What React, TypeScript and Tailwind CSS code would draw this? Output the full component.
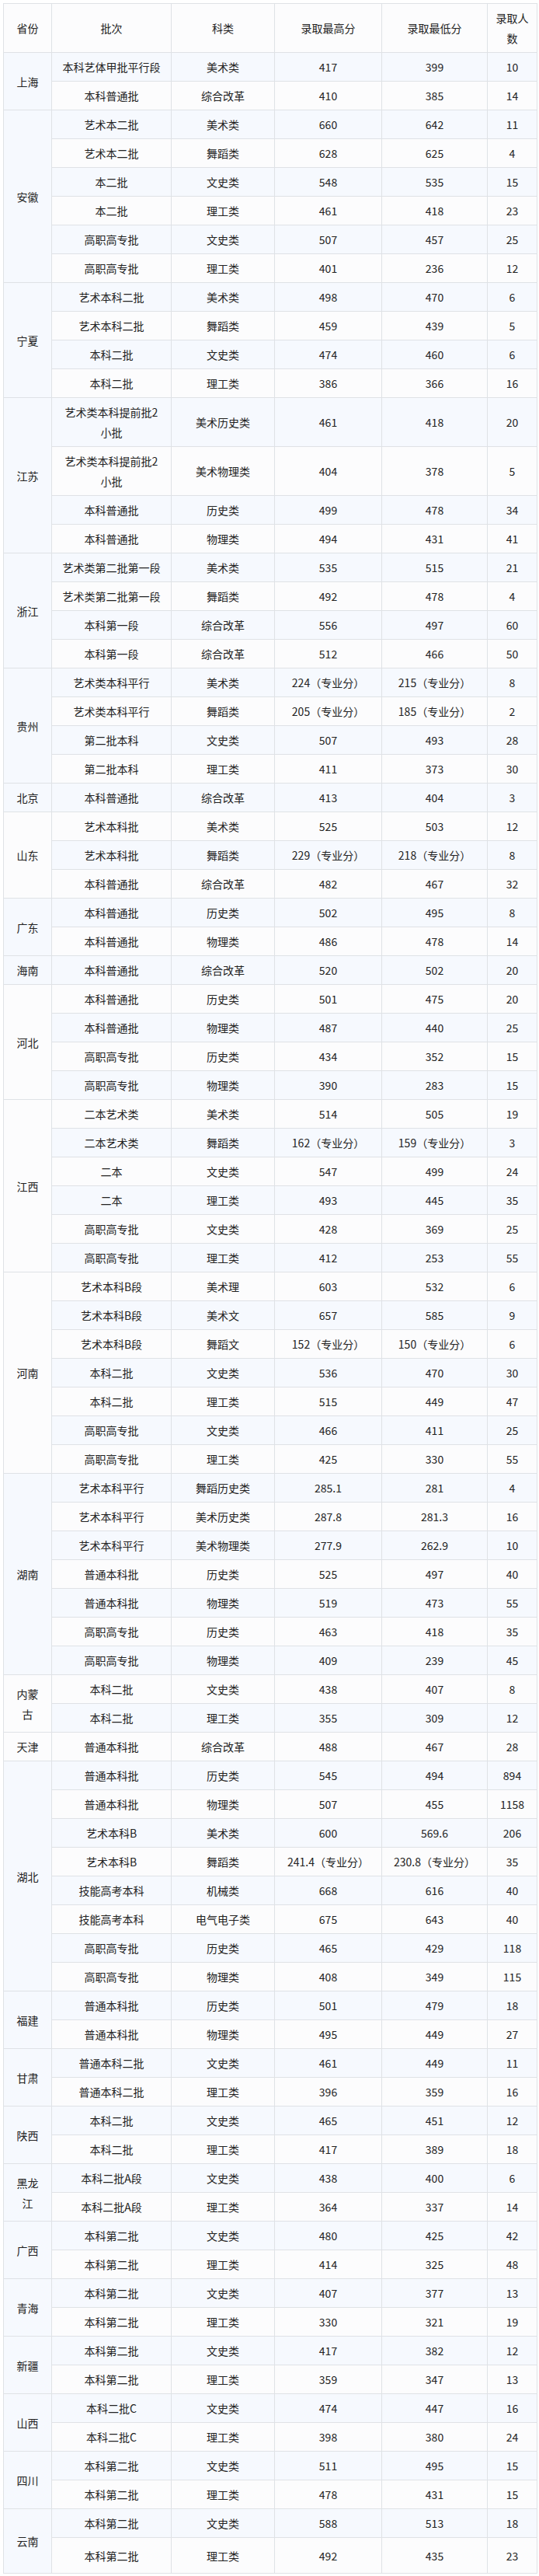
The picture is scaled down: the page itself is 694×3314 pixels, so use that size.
type Row = [string, string, string, string, string]
type Group = { p: string; rows: Row[] }

const groups: Group[] = [
  { p: "上海", rows: [
    ["本科艺体甲批平行段", "美术类", "417", "399", "10"],
    ["本科普通批", "综合改革", "410", "385", "14"],
  ] },
  { p: "安徽", rows: [
    ["艺术本二批", "美术类", "660", "642", "11"],
    ["艺术本二批", "舞蹈类", "628", "625", "4"],
    ["本二批", "文史类", "548", "535", "15"],
    ["本二批", "理工类", "461", "418", "23"],
    ["高职高专批", "文史类", "507", "457", "25"],
    ["高职高专批", "理工类", "401", "236", "12"],
  ] },
  { p: "宁夏", rows: [
    ["艺术本科二批", "美术类", "498", "470", "6"],
    ["艺术本科二批", "舞蹈类", "459", "439", "5"],
    ["本科二批", "文史类", "474", "460", "6"],
    ["本科二批", "理工类", "386", "366", "16"],
  ] },
  { p: "江苏", rows: [
    ["艺术类本科提前批2\n小批", "美术历史类", "461", "418", "20"],
    ["艺术类本科提前批2\n小批", "美术物理类", "404", "378", "5"],
    ["本科普通批", "历史类", "499", "478", "34"],
    ["本科普通批", "物理类", "494", "431", "41"],
  ] },
  { p: "浙江", rows: [
    ["艺术类第二批第一段", "美术类", "535", "515", "21"],
    ["艺术类第二批第一段", "舞蹈类", "492", "478", "4"],
    ["本科第一段", "综合改革", "556", "497", "60"],
    ["本科第一段", "综合改革", "512", "466", "50"],
  ] },
  { p: "贵州", rows: [
    ["艺术类本科平行", "美术类", "224（专业分）", "215（专业分）", "8"],
    ["艺术类本科平行", "舞蹈类", "205（专业分）", "185（专业分）", "2"],
    ["第二批本科", "文史类", "507", "493", "28"],
    ["第二批本科", "理工类", "411", "373", "30"],
  ] },
  { p: "北京", rows: [
    ["本科普通批", "综合改革", "413", "404", "3"],
  ] },
  { p: "山东", rows: [
    ["艺术本科批", "美术类", "525", "503", "12"],
    ["艺术本科批", "舞蹈类", "229（专业分）", "218（专业分）", "8"],
    ["本科普通批", "综合改革", "482", "467", "32"],
  ] },
  { p: "广东", rows: [
    ["本科普通批", "历史类", "502", "495", "8"],
    ["本科普通批", "物理类", "486", "478", "14"],
  ] },
  { p: "海南", rows: [
    ["本科普通批", "综合改革", "520", "502", "20"],
  ] },
  { p: "河北", rows: [
    ["本科普通批", "历史类", "501", "475", "20"],
    ["本科普通批", "物理类", "487", "440", "25"],
    ["高职高专批", "历史类", "434", "352", "15"],
    ["高职高专批", "物理类", "390", "283", "15"],
  ] },
  { p: "江西", rows: [
    ["二本艺术类", "美术类", "514", "505", "19"],
    ["二本艺术类", "舞蹈类", "162（专业分）", "159（专业分）", "3"],
    ["二本", "文史类", "547", "499", "24"],
    ["二本", "理工类", "493", "445", "35"],
    ["高职高专批", "文史类", "428", "369", "25"],
    ["高职高专批", "理工类", "412", "253", "55"],
  ] },
  { p: "河南", rows: [
    ["艺术本科B段", "美术理", "603", "532", "6"],
    ["艺术本科B段", "美术文", "657", "585", "9"],
    ["艺术本科B段", "舞蹈文", "152（专业分）", "150（专业分）", "6"],
    ["本科二批", "文史类", "536", "470", "30"],
    ["本科二批", "理工类", "515", "449", "47"],
    ["高职高专批", "文史类", "466", "411", "25"],
    ["高职高专批", "理工类", "425", "330", "55"],
  ] },
  { p: "湖南", rows: [
    ["艺术本科平行", "舞蹈历史类", "285.1", "281", "4"],
    ["艺术本科平行", "美术历史类", "287.8", "281.3", "16"],
    ["艺术本科平行", "美术物理类", "277.9", "262.9", "10"],
    ["普通本科批", "历史类", "525", "497", "40"],
    ["普通本科批", "物理类", "519", "473", "55"],
    ["高职高专批", "历史类", "463", "418", "35"],
    ["高职高专批", "物理类", "409", "239", "45"],
  ] },
  { p: "内蒙\n古", rows: [
    ["本科二批", "文史类", "438", "407", "8"],
    ["本科二批", "理工类", "355", "309", "12"],
  ] },
  { p: "天津", rows: [
    ["普通本科批", "综合改革", "488", "467", "28"],
  ] },
  { p: "湖北", rows: [
    ["普通本科批", "历史类", "545", "494", "894"],
    ["普通本科批", "物理类", "507", "455", "1158"],
    ["艺术本科B", "美术类", "600", "569.6", "206"],
    ["艺术本科B", "舞蹈类", "241.4（专业分）", "230.8（专业分）", "35"],
    ["技能高考本科", "机械类", "668", "616", "40"],
    ["技能高考本科", "电气电子类", "675", "643", "40"],
    ["高职高专批", "历史类", "465", "429", "118"],
    ["高职高专批", "物理类", "408", "349", "115"],
  ] },
  { p: "福建", rows: [
    ["普通本科批", "历史类", "501", "479", "18"],
    ["普通本科批", "物理类", "495", "449", "27"],
  ] },
  { p: "甘肃", rows: [
    ["普通本科二批", "文史类", "461", "449", "11"],
    ["普通本科二批", "理工类", "396", "359", "16"],
  ] },
  { p: "陕西", rows: [
    ["本科二批", "文史类", "465", "451", "12"],
    ["本科二批", "理工类", "417", "389", "18"],
  ] },
  { p: "黑龙\n江", rows: [
    ["本科二批A段", "文史类", "438", "400", "6"],
    ["本科二批A段", "理工类", "364", "337", "14"],
  ] },
  { p: "广西", rows: [
    ["本科第二批", "文史类", "480", "425", "42"],
    ["本科第二批", "理工类", "414", "325", "48"],
  ] },
  { p: "青海", rows: [
    ["本科第二批", "文史类", "407", "377", "13"],
    ["本科第二批", "理工类", "330", "321", "19"],
  ] },
  { p: "新疆", rows: [
    ["本科第二批", "文史类", "417", "382", "12"],
    ["本科第二批", "理工类", "359", "347", "13"],
  ] },
  { p: "山西", rows: [
    ["本科二批C", "文史类", "474", "447", "16"],
    ["本科二批C", "理工类", "398", "380", "24"],
  ] },
  { p: "四川", rows: [
    ["本科第二批", "文史类", "511", "495", "15"],
    ["本科第二批", "理工类", "478", "431", "15"],
  ] },
  { p: "云南", rows: [
    ["本科第二批", "文史类", "588", "513", "18"],
    ["本科第二批", "理工类", "492", "435", "23"],
  ] },
]

const cell = "border border-[#dfe2e6] px-[10px] py-[5px] whitespace-pre-line align-middle"

export default function App() {
  const total = groups.reduce((s, g) => s + g.rows.length, 0)
  let n = 0
  const body = groups.flatMap((g) =>
    g.rows.map((r, i) => {
      n++
      const bg = n % 2 === 1 ? "bg-[#f6f9fe]" : "bg-[#fcfcfd]"
      const last = n === total
      return (
        <tr key={n} className={last ? "h-[46px]" : ""}>
          {i === 0 && (
            <td rowSpan={g.rows.length} className={`${cell} ${bg}`}>
              {g.p}
            </td>
          )}
          {r.map((v, k) => (
            <td key={k} className={`${cell} ${bg}`}>
              {v}
            </td>
          ))}
        </tr>
      )
    })
  )

  return (
    <div className="bg-white pl-[4px] pt-[4px] pb-[3px] font-['Noto_Sans_CJK_SC','Noto_Sans',sans-serif] text-[14px] leading-[26px] text-[#222]">
      <table className="w-[687px] table-fixed border-collapse border border-[#dfe2e6] text-center">
        <colgroup>
          <col className="w-[62px]" />
          <col className="w-[154px]" />
          <col className="w-[133px]" />
          <col className="w-[138px]" />
          <col className="w-[136px]" />
          <col className="w-[64px]" />
        </colgroup>
        <thead>
          <tr>
            <th className={`${cell} bg-[#fcfcfd] font-normal`}>省份</th>
            <th className={`${cell} bg-[#fcfcfd] font-normal`}>批次</th>
            <th className={`${cell} bg-[#fcfcfd] font-normal`}>科类</th>
            <th className={`${cell} bg-[#fcfcfd] font-normal`}>录取最高分</th>
            <th className={`${cell} bg-[#fcfcfd] font-normal`}>录取最低分</th>
            <th className={`${cell} bg-[#fcfcfd] font-normal`}>{"录取人\n数"}</th>
          </tr>
        </thead>
        <tbody>{body}</tbody>
      </table>
    </div>
  )
}
